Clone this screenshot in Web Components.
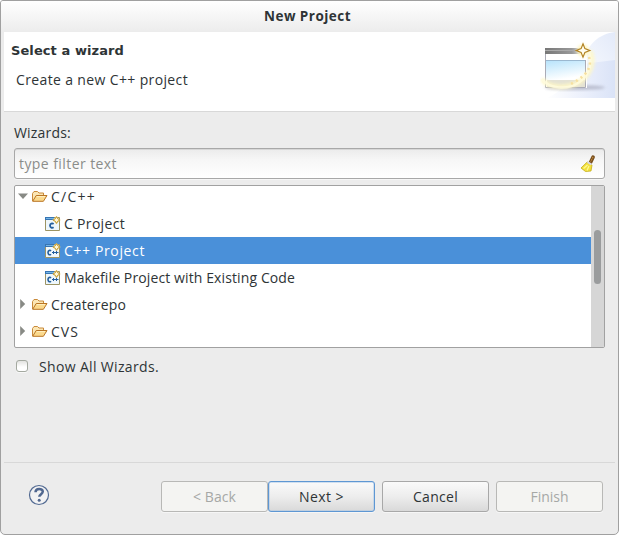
<!DOCTYPE html>
<html lang="en"><head><meta charset="utf-8"><title>New Project</title>
<style>html,body{margin:0;width:619px;height:535px;overflow:hidden;background:#fff}</style></head>
<body><wizard-dialog></wizard-dialog>
<script>
const define=(name,html,after)=>customElements.define(name,class extends HTMLElement{
  connectedCallback(){
    if(this.shadowRoot)return;
    this.attachShadow({mode:'open'});
    const t=document.createElement('template');
    t.innerHTML=html;
    this.shadowRoot.append(t.content.cloneNode(true));
    if(after)after(this,this.shadowRoot);
  }
});

// Single-line label whose tracking is adjusted to fill the width in "w".
define('ui-label',`<style>:host{display:block;white-space:pre;line-height:18px}span{display:inline-block}</style><span></span>`,(el,root)=>{
  const s=root.querySelector('span');
  s.textContent=el.getAttribute('text');
  const w=+el.getAttribute('w');
  if(w)s.style.letterSpacing=((w-s.getBoundingClientRect().width)/s.textContent.length)+'px';
});

const SPARK='<path d="M11.500 -.2 13.300 2.200 15.800 4 13.300 5.800 11.500 8.200 9.700 5.800 7.200 4 9.700 2.200z" fill="#ecd07a"/><path d="m11.500 .7 1.200 2.100L15 4l-2.300 1.200-1.200 2.100-1.200-2.100L8 4l2.300-1.200z" fill="#fff8d8" stroke="#b98d22" stroke-width=".8"/>';
const WINDOW='<path d="M.5 1.500h14v13H.5z" fill="#eef7fc" stroke="#9c9464"/><path d="M0 1h9v3H0z" fill="#3775b4"/><path d="M1 2.500h8" stroke="#74b5e5"/>';
const ICONS={
  folder:'<path d="M.5 12V4.500l1.500-2h3.500l1.500 1.500h4.500V7" fill="#fbe6b4" stroke="#c98a3a"/><path d="M.7 12.300 4.200 6.500H15l-3.600 5.800z" fill="#fbd98c" stroke="#b97524"/><path d="M4.800 7.600h8.200" stroke="#fff0c4"/>',
  c:WINDOW+'<path d="M8.600 8C7.200 6.900 5 7.400 5 9.600s2.200 2.700 3.600 1.600" fill="none" stroke="#245f9d" stroke-width="1.800"/>'+SPARK,
  cpp:WINDOW+'<path d="M6 8C5 6.900 3 7.400 3 9.600s2 2.700 3 1.600" fill="none" stroke="#245f9d" stroke-width="1.600"/><path d="M7 9.500h6.500M8.500 8v3M11.500 8v3" stroke="#245f9d"/>'+SPARK
};
define('tree-row',`<style>
:host{display:flex;align-items:center;height:27px;box-sizing:border-box;padding-left:2px;color:#2e3436}
:host([child]){padding-left:30px}:host([child]) .arrow{display:none}
:host([selected]){background:#4a90d9;color:#fff}
.arrow{width:12px;height:12px;margin-right:3px;margin-bottom:2px}
:host(:not([child])) .arrow{margin-left:-.5px;margin-right:3.500px}
.icon{width:16px;height:16px;flex:none}
ui-label{margin-left:3px;margin-top:1px}</style>
<svg class="arrow" viewBox="0 0 12 12"></svg><svg class="icon" viewBox="0 0 16 16"></svg><ui-label></ui-label>`,(el,root)=>{
  root.querySelector('.arrow').innerHTML=el.hasAttribute('open')?'<path d="M1 3.500h10L6 9z" fill="#888a85"/>':'<path d="M3.200 1v10l5-5z" fill="#888a85"/>';
  root.querySelector('.icon').innerHTML=ICONS[el.getAttribute('icon')];
  const old=root.querySelector('ui-label'),l=document.createElement('ui-label');
  l.setAttribute('text',el.getAttribute('text'));l.setAttribute('w',el.getAttribute('w'));
  old.replaceWith(l);
});

define('push-button',`<style>
:host{display:flex;align-items:center;justify-content:center;box-sizing:border-box;width:107px;height:31px;border:1px solid #a8a8a8;border-radius:3px;
background:linear-gradient(#fafafa,#ededed 50%,#d9d9d9);box-shadow:0 1px #f6f6f6;color:#2e3436}
:host([disabled]){background:#f4f4f2;border-color:#b8b8b6;color:#a6a8a6}
:host([default]){border-color:#5e97d3;box-shadow:inset 0 0 0 .5px #a8c6e6,0 1px #f6f6f6}</style><slot></slot>`);

define('filter-field',`<style>
:host{display:flex;align-items:center;justify-content:space-between;box-sizing:border-box;height:31px;border:1px solid #a8a8a8;border-radius:3px;
background:linear-gradient(#ebebeb,#f7f7f7 40%,#fff);box-shadow:inset 0 1px #d7d7d7,0 1px #f6f6f6;padding:0 8px 0 4px;color:#8b8d8a}
svg{width:16px;height:18px}</style>
<ui-label text="type filter text" w="98"></ui-label>
<svg viewBox="0 0 16 18"><path d="M13 2.200 10.500 7.500" stroke="#79501f" stroke-width="3.600" stroke-linecap="round"/><path d="m13 2-2.500 5" stroke="#c28b43" stroke-width="1.300" stroke-dasharray="1.500 1"/><path d="M7.200 7 12 10 11 16 5.500 16.500 1 13z" fill="#f2df3c" stroke="#c4ad18" stroke-width=".8"/><path d="m7.500 10-4 3.500M9 11l-2 4.500" stroke="#fff98e" stroke-width="1.300"/><path d="m7.500 7 4 2.500" stroke="#d8d8e8" stroke-width="2"/></svg>`);

define('tree-view',`<style>
:host{display:flex;box-sizing:border-box;height:163px;border:1px solid #a1a1a1;border-radius:2px;background:#fff;overflow:hidden}
.rows{flex:1;margin-top:-3px}.bar{width:13px;background:#d6d6d6;box-sizing:border-box;padding:44px 0 0 3px}
.thumb{width:7px;height:54px;border-radius:4px;background:#9a9c9d}</style>
<div class="rows"><slot></slot></div><div class="bar"><div class="thumb"></div></div>`);

define('check-box',`<style>:host{display:flex;align-items:center}i{box-sizing:border-box;width:12px;height:12px;border:1px solid #a4a9a0;border-radius:3px;background:linear-gradient(#e2e2e0,#fff 60%);box-shadow:0 1px #f8f8f8;margin:0 11px 2px 2px}</style><i></i><slot></slot>`);

define('wizard-art',`<style>:host,svg{display:block}</style>
<svg width="75" height="66" viewBox="540 32 75 66">
<defs><linearGradient id="bg"><stop offset="0" stop-color="#fff"/><stop offset=".6" stop-color="#e9eefb"/><stop offset="1" stop-color="#dae3f7"/></linearGradient>
<linearGradient id="bow" x1="0" y1=".8" x2="1" y2="0"><stop stop-color="#f4f7fd"/><stop offset="1" stop-color="#e3eaf9"/></linearGradient>
<linearGradient id="sky" x2=".3" y2="1"><stop stop-color="#b5e2fb"/><stop offset="1" stop-color="#fff"/></linearGradient>
<linearGradient id="cap"><stop stop-color="#777"/><stop offset=".65" stop-color="#999"/><stop offset="1" stop-color="#eee"/></linearGradient>
<filter id="blur" x="-30%" y="-30%" width="160%" height="160%"><feGaussianBlur stdDeviation="1.800"/></filter></defs>
<path d="M546 98C575 88 570 60 590 57L615 48v50z" fill="url(#bg)"/>
<path d="M582 64C588 42 600 34 615 32v28z" fill="url(#bow)"/>
<ellipse cx="575" cy="87.500" rx="30" ry="2.500" fill="#a6a9bb" opacity=".7" filter="url(#blur)"/>
<path d="M545 48h42v40h-42z" fill="#fff"/><path d="M545 48h41v6h-41z" fill="url(#cap)"/><path d="M545 50.500h32" stroke="#aaa"/>
<path d="M545.500 54v33.500h40V60" fill="none" stroke="#aaabb6"/><path d="M546 60h39v20h-39z" fill="url(#sky)"/>
<path d="M546 60.500h39" stroke="#9bb8d0"/><path d="M547 80h38v7h-38z" fill="#e4e2d4"/>
<path d="M542 79c5 9 28 11 40 1 11-9 12-20 8-29" fill="none" stroke="#fff8c6" stroke-width="5" opacity=".85" filter="url(#blur)"/>
<path d="M542 79c7 10 26 11 36 4 10-6 15-17 11-32" fill="none" stroke="#fffbdf" stroke-width="2.500" opacity=".8"/>
<g fill="none" stroke="#f7e0a0" stroke-width="2.600" stroke-dasharray="2 3.600"><path d="M589 57c3 10-1 18-18 27"/></g>
<circle cx="583" cy="50.500" r="6" fill="#fff6c3" filter="url(#blur)"/>
<path d="m583 43.800 1.900 4.800 4.800 1.900-4.800 1.900-1.900 4.800-1.900-4.800-4.800-1.900 4.800-1.900z" fill="#fffdf0" stroke="#b28223" stroke-width="1.200"/></svg>`);

define('wizard-dialog',`<style>
:host{display:flex;flex-direction:column;box-sizing:border-box;width:619px;height:535px;border:1px solid #a0a0a0;border-radius:3px 3px 5px 5px;background:#ececec;color:#2e3436;font:14px "Open Sans","Noto Sans",sans-serif;overflow:hidden}
.title{height:31px;display:flex;align-items:center;justify-content:center;background:linear-gradient(#fff,#ececec);font-weight:700;font-size:13.500px;box-sizing:border-box;padding:0 4px 2px 0}
.head{height:80px;box-sizing:border-box;margin:0 3px;background:#fff;border-bottom:1px solid #d8d8d8;display:flex;justify-content:space-between;padding-left:7px}
.head .t{padding-top:10px}.t .h{font:bold 13px "DejaVu Sans",sans-serif;line-height:18px}.t .d{margin:11px 0 0 5px}
.body{padding:12px 13px 0;height:350px;box-sizing:border-box}
filter-field{margin-top:6px}tree-view{margin-top:6px}check-box{margin-top:10px}
.foot{flex:1;margin:0 3px;border-top:1px solid #d8d8d8;display:flex;padding:18px 12px 0 24px;align-items:flex-start}
.help{margin:3px auto 0 0}.foot push-button+push-button+push-button{margin-left:7px}</style>
<div class="title"><ui-label text="New Project" w="87"></ui-label></div>
<div class="head"><div class="t"><ui-label class="h" text="Select a wizard" w="113"></ui-label><ui-label class="d" text="Create a new C++ project" w="172"></ui-label></div><wizard-art></wizard-art></div>
<div class="body"><ui-label text="Wizards:" w="57"></ui-label><filter-field></filter-field>
<tree-view>
<tree-row open icon="folder" text="C/C++" w="45"></tree-row>
<tree-row child icon="c" text="C Project" w="61"></tree-row>
<tree-row child selected icon="cpp" text="C++ Project" w="81"></tree-row>
<tree-row child icon="cpp" text="Makefile Project with Existing Code" w="231"></tree-row>
<tree-row icon="folder" text="Createrepo" w="75"></tree-row>
<tree-row icon="folder" text="CVS" w="28"></tree-row>
</tree-view>
<check-box><ui-label text="Show All Wizards." w="120"></ui-label></check-box></div>
<div class="foot"><svg class="help" width="22" height="22" viewBox="0 0 22 22"><circle cx="11" cy="11" r="9.500" fill="#f2f2f3" stroke="#526a92" stroke-width="1.200"/><path d="M7.500 8.300c0-4.500 7.300-4.200 7.300-.7 0 2.500-3.500 2.700-3.500 5.200" fill="none" stroke="#50678f" stroke-width="2.500"/><circle cx="11.200" cy="16.300" r="1.500" fill="#50678f"/></svg>
<push-button disabled><ui-label text="&lt; Back" w="43"></ui-label></push-button>
<push-button default><ui-label text="Next &gt;" w="45"></ui-label></push-button>
<push-button><ui-label text="Cancel" w="45"></ui-label></push-button>
<push-button disabled><ui-label text="Finish" w="38"></ui-label></push-button></div>`);
</script></body></html>
